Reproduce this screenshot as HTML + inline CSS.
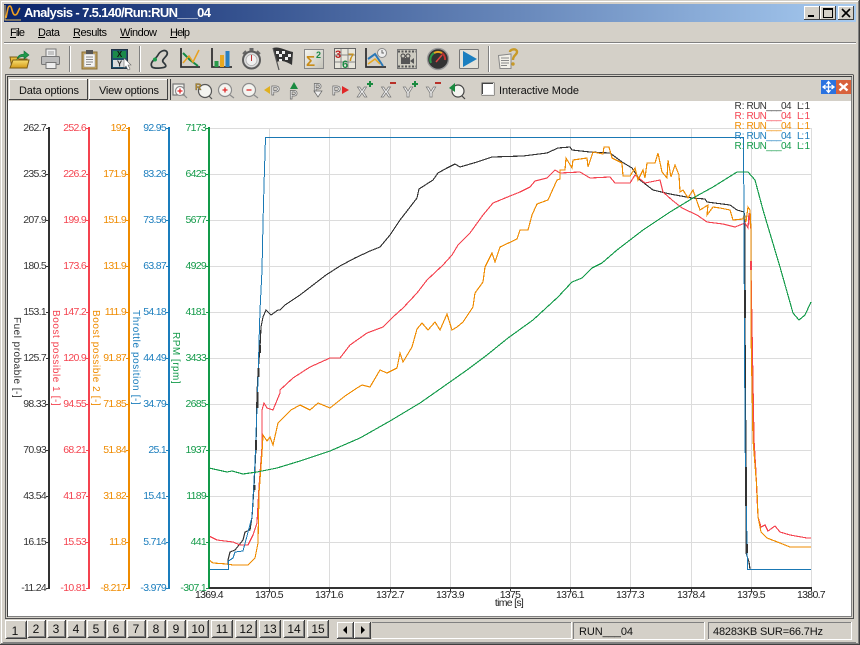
<!DOCTYPE html>
<html><head><meta charset="utf-8"><title>Analysis</title>
<style>
html,body{margin:0;padding:0;background:#d4d0c8}
svg{display:block;position:absolute;left:0;top:0}
text{font-family:"Liberation Sans",sans-serif;font-size:10.5px;letter-spacing:-.7px}
.m{font-size:11px;letter-spacing:0;fill:#000}
.t{font-size:12px;letter-spacing:0;fill:#111;text-anchor:middle}
.b{font-size:11px;letter-spacing:0;fill:#111}
.k text{fill:#333;text-anchor:end}.r text{fill:#f4434f;text-anchor:end}.o text{fill:#ef8b00;text-anchor:end}.u text{fill:#1a7dbd;text-anchor:end}.g text{fill:#139a49;text-anchor:end}
.x text{fill:#222;text-anchor:middle}
.v{letter-spacing:.35px;font-size:10px}
.l text{font-size:10px;letter-spacing:0}
.ic{font-family:"Liberation Sans",sans-serif;font-weight:bold;letter-spacing:0}
</style></head><body>
<svg width="860" height="645" viewBox="0 0 860 645" xmlns="http://www.w3.org/2000/svg">
<defs><linearGradient id="tb" x1="0" x2="1" y1="0" y2="0"><stop offset="0" stop-color="#0a246a"/><stop offset="1" stop-color="#a6caf0"/></linearGradient>
<linearGradient id="fo" x1="0" x2="0" y1="0" y2="1"><stop offset="0" stop-color="#f8df70"/><stop offset="1" stop-color="#d49a18"/></linearGradient>
<linearGradient id="bt" x1="0" x2="1" y1="0" y2="1"><stop offset="0" stop-color="#f4f4ee"/><stop offset="1" stop-color="#c4c2b8"/></linearGradient></defs>

<!-- window chrome -->
<rect width="860" height="645" fill="#d4d0c8"/>
<path d="M.5 645V.5H859" stroke="#d4d0c8" fill="none"/>
<path d="M1.5 644V1.5H858" stroke="#fff" fill="none"/>
<path d="M859.5 0V644.5H0" stroke="#404040" fill="none"/>
<path d="M858.5 1V643.5H1" stroke="#808080" fill="none"/>
<rect x="4" y="4" width="852" height="18" fill="url(#tb)"/>
<path d="M6 18C8 8 8 6 10 6C12 6 12 15 15 15C18 15 18 10 20 8" stroke="#f0a020" stroke-width="1.6" fill="none"/>
<path d="M5 5V20H21" stroke="#e8c060" fill="none"/>
<text x="24" y="17" textLength="187" style="font-size:13px;font-weight:bold;letter-spacing:0" fill="#fff">Analysis - 7.5.140/Run:RUN___04</text>
<!-- caption buttons -->
<g>
<rect x="804" y="6" width="16" height="14" fill="#d4d0c8"/><path d="M804.5 20V6.500H819.500" stroke="#fff" fill="none"/><path d="M819.500 6V19.500H804" stroke="#404040" fill="none"/><rect x="808" y="15" width="6" height="2" fill="#000"/>
<rect x="820" y="6" width="16" height="14" fill="#d4d0c8"/><path d="M820.5 20V6.500H835.500" stroke="#fff" fill="none"/><path d="M835.500 6V19.500H820" stroke="#404040" fill="none"/><path d="M823.500 8.500H832.500V17.500H823.500Z M823 9.500H833" stroke="#000" fill="none"/>
<rect x="838" y="6" width="16" height="14" fill="#d4d0c8"/><path d="M838.5 20V6.500H853.500" stroke="#fff" fill="none"/><path d="M853.500 6V19.500H838" stroke="#404040" fill="none"/><path d="M842 9L850 17M850 9L842 17" stroke="#000" stroke-width="1.6"/>
</g>

<!-- menu -->
<text class="m" x="10" y="36" textLength="15">File</text><rect x="10" y="37" width="6" height="1"/>
<text class="m" x="38" y="36" textLength="22">Data</text><rect x="38" y="37" width="7" height="1"/>
<text class="m" x="73" y="36" textLength="34">Results</text><rect x="73" y="37" width="7" height="1"/>
<text class="m" x="120" y="36" textLength="37">Window</text><rect x="120" y="37" width="10" height="1"/>
<text class="m" x="170" y="36" textLength="20">Help</text><rect x="170" y="37" width="7" height="1"/>
<rect x="4" y="42" width="852" height="1" fill="#808080"/><rect x="4" y="43" width="852" height="1" fill="#fff"/>

<!-- toolbar icons -->
<rect x="69" y="46" width="1" height="26" fill="#808080"/><rect x="70" y="46" width="1" height="26" fill="#fff"/>
<rect x="139" y="46" width="1" height="26" fill="#808080"/><rect x="140" y="46" width="1" height="26" fill="#fff"/>
<rect x="488" y="46" width="1" height="26" fill="#808080"/><rect x="489" y="46" width="1" height="26" fill="#fff"/>
<!-- open -->
<path d="M10 57H17L19 59H27V68H12Z" fill="#e9bb3c" stroke="#7c5c14"/><path d="M10 68L13 60H29L27 68Z" fill="url(#fo)" stroke="#7c5c14"/>
<path d="M17 59C18 55 21 54 24 54V51L29 55L24 59V56.500C21 56.500 19 57 17 59Z" fill="#1f9a4a" stroke="#14703a" stroke-width=".6"/>
<!-- print -->
<rect x="46" y="49" width="10" height="8" fill="#eee" stroke="#777"/><path d="M48 52H54M48 54H54" stroke="#999"/>
<rect x="41.500" y="56.500" width="18" height="8" rx="1" fill="#bbb" stroke="#777"/><rect x="46" y="62.500" width="10" height="6" fill="#eee" stroke="#777"/>
<!-- clipboard -->
<rect x="82" y="52" width="15" height="17" fill="#c4a25c" stroke="#8a7038"/><rect x="84" y="54" width="11" height="13" fill="#f4f4f4" stroke="#888" stroke-width=".5"/><rect x="86" y="50" width="7" height="4" fill="#555"/>
<path d="M86 57H93M86 59.500H93M86 62H93M86 64.500H91" stroke="#888"/>
<!-- XY -->
<rect x="111.500" y="49.500" width="16" height="19" fill="#1e4f6a" stroke="#234"/><rect x="113" y="51" width="13" height="7" fill="#1b8a4a"/><rect x="113" y="60" width="13" height="7" fill="#ddd"/>
<text class="ic" x="119.500" y="57" text-anchor="middle" style="font-size:8px" fill="#111">X</text><text class="ic" x="119.500" y="66.500" text-anchor="middle" style="font-size:8px" fill="#333">Y</text>
<path d="M124 58V68L126 66L128 70L130 69L128 65H131Z" fill="#fff" stroke="#666" stroke-width=".6"/>
<!-- track -->
<path d="M152 67C149 62 156 59 158 55C160 51 165 49 167 52C169 56 161 59 163 62C165 64 167 66 165 67C163 68 155 69 152 67Z" fill="none" stroke="#30383c" stroke-width="1.700"/><circle cx="155" cy="59.500" r="2" fill="#1a9a4a"/>
<!-- line chart -->
<path d="M181 48V67H200" stroke="#333" stroke-width="1.800" fill="none"/><path d="M183 53L190 60L198 66" stroke="#148a46" stroke-width="2" fill="none"/><path d="M183 63L189 56L193 62L199 50" stroke="#e8a020" stroke-width="1.500" fill="none"/>
<!-- bar -->
<path d="M212 48V67H232" stroke="#333" stroke-width="1.800" fill="none"/><rect x="214.500" y="61" width="4" height="6" fill="#2a9a4a"/><rect x="220" y="55" width="4" height="12" fill="#e8a820"/><rect x="225.500" y="51" width="4" height="16" fill="#2a80c0"/>
<!-- stopwatch -->
<circle cx="251.500" cy="60" r="8.500" fill="#dcdcdc" stroke="#5c5c5c" stroke-width="2"/><circle cx="251.500" cy="60" r="5.500" fill="#f0f0f0" stroke="#aaa" stroke-width=".7"/><rect x="249.500" y="48" width="4" height="3" fill="#666"/><path d="M257 51L260 54M246 51L243 54" stroke="#666" stroke-width="2"/><path d="M251.500 55V61" stroke="#c03030"/>
<!-- flag -->
<path d="M273 48C279 46 284 50 293 52L292 65C285 61 281 60 277 62Z" fill="#333"/>
<path d="M276 51h3v3h-3zM282 51h3v3h-3zM288 54h3v3h-3zM279 54h3v3h-3zM285 57h3v3h-3zM279 59h3v2h-3z" fill="#eee"/>
<path d="M273 48L279 70" stroke="#555" stroke-width="1.200"/>
<!-- sigma -->
<rect x="304.500" y="49.500" width="19" height="19" fill="url(#bt)" stroke="#888"/><text class="ic" x="306" y="66" style="font-size:15px" fill="#c98c18">Σ</text><text class="ic" x="316" y="58" style="font-size:9px" fill="#1a8a46">2</text>
<!-- grid -->
<rect x="334.500" y="48.500" width="21" height="20" fill="#e8e6dc" stroke="#666"/><path d="M341 49V68M348 49V68M335 55H355M335 62H355" stroke="#888"/>
<text class="ic" x="335" y="58" style="font-size:11px" fill="#c02020">3</text><text class="ic" x="342" y="68" style="font-size:11px" fill="#188a44">6</text><text class="ic" x="348" y="61" style="font-size:11px" fill="#c89018">7</text>
<!-- chart clock -->
<path d="M366 48V67H386" stroke="#333" stroke-width="1.800" fill="none"/><path d="M368 59L375 54L383 66" stroke="#2a78b8" stroke-width="2" fill="none"/><path d="M368 64L375 59L380 64" stroke="#e8a820" stroke-width="1.500" fill="none"/><circle cx="382" cy="53" r="4.500" fill="#eee" stroke="#888"/><path d="M382 50V53H384" stroke="#666" fill="none"/>
<!-- film -->
<rect x="397.500" y="49.500" width="19" height="19" fill="#cdcbc0" stroke="#777"/><path d="M398 51.500H416M398 66.500H416" stroke="#555" stroke-width="2" stroke-dasharray="2 1.500"/>
<circle cx="403" cy="56" r="2" fill="none" stroke="#444"/><circle cx="408" cy="56" r="2" fill="none" stroke="#444"/><rect x="401" y="58" width="9" height="6" fill="#555"/><path d="M410 61L414 58V64Z" fill="#555"/>
<!-- gauge -->
<circle cx="438" cy="59" r="10.500" fill="#333" stroke="#999" stroke-width="1.400"/><path d="M431 63A8 8 0 0 1 434 53" stroke="#2a9a4a" stroke-width="2" fill="none"/><path d="M434 53A8 8 0 0 1 442 53" stroke="#e8a820" stroke-width="2" fill="none"/><path d="M442 53A8 8 0 0 1 445 60" stroke="#c03030" stroke-width="2" fill="none"/><path d="M436 62L442 55" stroke="#e04040" stroke-width="1.500"/>
<!-- play -->
<rect x="459.500" y="49.500" width="19" height="19" rx="1" fill="#e4e2da" stroke="#777"/><path d="M463 51V67L477 59Z" fill="#1b7fc0"/>
<!-- help -->
<path d="M498.500 55.500L511 54V68.500H500Z" fill="#f2f0e8" stroke="#888"/><path d="M501 58H509M501 60.500H509M501 63H509M501 65.500H507" stroke="#888"/>
<path d="M510 52C510 49 517 48 517 52C517 55 513 55 513 60" stroke="#c89a28" stroke-width="2.400" fill="none"/><circle cx="513" cy="64" r="1.700" fill="#c89a28"/>

<!-- MDI frame -->
<rect x="5" y="74" width="849" height="545" fill="#d4d0c8"/>
<path d="M5.500 618.500V74.500H853.500" stroke="#606060" fill="none"/>
<path d="M7.500 617V76.500H852" stroke="#404040" fill="none"/>
<path d="M853.500 75V618.500H5" stroke="#505050" fill="none"/>
<path d="M851.500 77V616.500H8" stroke="#808080" fill="none"/>
<rect x="8" y="101" width="843" height="515" fill="#fff"/>

<!-- header buttons -->
<rect x="9" y="79" width="79" height="21" fill="#d4d0c8"/><path d="M9.500 100V79.500H88" stroke="#fff" fill="none"/><path d="M87.500 79V99.500H9" stroke="#404040" fill="none"/>
<text class="b" x="19" y="94" textLength="60">Data options</text>
<rect x="89" y="79" width="79" height="21" fill="#d4d0c8"/><path d="M89.500 100V79.500H168" stroke="#fff" fill="none"/><path d="M167.500 79V99.500H89" stroke="#404040" fill="none"/>
<text class="b" x="99" y="94" textLength="60">View options</text>
<rect x="170" y="79" width="1" height="21" fill="#404040"/>

<!-- second toolbar -->
<g fill="none" stroke="#8c8c8c" stroke-width="1.200">
<rect x="173" y="84" width="11" height="11" fill="#f2f2ee" stroke="#777"/><circle cx="180" cy="91" r="4.500" fill="#fff"/><path d="M184 95L187 98"/>
<circle cx="205" cy="91" r="6.500" fill="#f4f4f0" stroke="#555"/><path d="M209 96L212 99" stroke="#555"/>
<circle cx="225" cy="90" r="6.500" fill="#f4f4f0"/><path d="M230 95L234 98"/>
<circle cx="249" cy="90" r="6.500" fill="#f4f4f0"/><path d="M254 95L258 98"/>
<circle cx="458" cy="91" r="6" fill="#f4f4f0" stroke="#444"/><path d="M462 96L465 99" stroke="#444"/>
</g>
<path d="M177.500 91H182.500M180 88.500V93.500M222.500 90H227.500M225 87.500V92.500" stroke="#e02828" stroke-width="1.300"/><path d="M246.500 90H251.500" stroke="#e02828" stroke-width="1.300"/>
<text class="ic" x="195" y="90" style="font-size:9px" fill="#c09020" stroke="#555" stroke-width=".3">R</text>
<path d="M264 90L270 86V94Z" fill="#e0b020"/><text class="ic" x="271" y="95" style="font-size:13px" fill="#eee" stroke="#666" stroke-width=".7">P</text>
<path d="M290 89L294 82L298 89Z" fill="#1a8a40"/><text class="ic" x="289.500" y="99" style="font-size:12px" fill="#eee" stroke="#666" stroke-width=".7">P</text>
<text class="ic" x="313.500" y="92" style="font-size:12px" fill="#eee" stroke="#666" stroke-width=".7">P</text><path d="M314 91L318 97L322 91Z" fill="#eee" stroke="#666" stroke-width=".7"/>
<text class="ic" x="332" y="95" style="font-size:13px" fill="#eee" stroke="#666" stroke-width=".7">P</text><path d="M342 86L349 90L342 94Z" fill="#e02828"/>
<text class="ic" x="357" y="97" style="font-size:15px" fill="#eee" stroke="#777" stroke-width=".7">X</text><path d="M367 84H373M370 81V87" stroke="#1a8a40" stroke-width="2"/>
<text class="ic" x="381" y="97" style="font-size:15px" fill="#eee" stroke="#777" stroke-width=".7">X</text><path d="M390 83H396" stroke="#b83028" stroke-width="2"/>
<text class="ic" x="403" y="97" style="font-size:15px" fill="#eee" stroke="#777" stroke-width=".7">Y</text><path d="M412 84H418M415 81V87" stroke="#1a8a40" stroke-width="2"/>
<text class="ic" x="426" y="97" style="font-size:15px" fill="#eee" stroke="#777" stroke-width=".7">Y</text><path d="M435 83H441" stroke="#b83028" stroke-width="2"/>
<path d="M449 88L455 83V92Z" fill="#1a8a40"/>
<rect x="482" y="83" width="12" height="12" fill="#fff" stroke="#555"/><path d="M482.500 95V83.500H494" stroke="#444" fill="none"/><path d="M493.500 83V94.500H482" stroke="#eee" fill="none"/>
<text class="b" x="499" y="94" textLength="80">Interactive Mode</text>
<rect x="821" y="80" width="15" height="14" fill="#2a72e0"/><path d="M828.500 82V92M823 87H834M826.500 84L828.500 81.500L830.500 84M826.500 90L828.500 92.500L830.500 90M825.500 85L823 87L825.500 89M831.500 85L834 87L831.500 89" stroke="#fff" stroke-width="1.300" fill="none"/>
<rect x="836" y="80" width="15" height="14" fill="#d8623c"/><path d="M839.500 83.500L847.500 90.500M847.500 83.500L839.500 90.500" stroke="#fff" stroke-width="2.400"/>

<!-- grid -->
<g stroke="#dcdcdc" stroke-width="1" shape-rendering="crispEdges">
<path d="M209 128.500H811M209 174.500H811M209 220.500H811M209 266.500H811M209 312.500H811M209 358.500H811M209 404.500H811M209 450.500H811M209 496.500H811M209 542.500H811"/>
<path d="M269.500 128V588M329.500 128V588M390.500 128V588M450.500 128V588M510.500 128V588M570.500 128V588M630.500 128V588M691.500 128V588M751.500 128V588M811.500 128V588"/>
</g>

<!-- curves -->
<g fill="none" stroke-width="1.150" shape-rendering="crispEdges" stroke-linejoin="miter">
<polyline stroke="#333" points="228,565 228,560 230,552 235,550 243,540 245,532 250,530 252,517 254,487 256,447 257,393 258,373 260,347 261,327 263,317 266,310 271,315 278,310 280,310 285,305 300,295 313,285 326,275 340,266 355,258 370,251 380,247 390,235 400,220 407,211 417,198 419,189 433,180 438,173 447,168 455,164 460,167 477,162 492,157 523,156 547,153 558,148 570,147 572,150 590,152 610,153 622,162 632,168 640,180 653,190 670,194 692,198 705,199 707,202 730,205 737,210 744,212 745,217 745,318 746,468 746,553 749,562 750,569"/>
<polyline stroke="#f4434f" points="209,536 217,540 233,542 240,545 248,545 253,535 257,523 259,487 262,447 262,410 264,403 267,408 273,410 280,393 280,390 293,378 310,367 330,358 340,358 350,345 367,333 383,327 393,317 403,308 417,293 427,280 443,265 452,255 458,245 470,233 483,215 493,203 510,196 520,192 530,187 535,181 547,178 555,170 560,173 580,172 590,178 610,177 615,183 630,183 635,175 645,183 660,180 663,192 672,200 682,208 697,215 707,222 723,224 735,227 745,223 748,228 749,213 751,230 751,270 754,440 756,473 757,497 758,517 761,527 765,525 768,531 775,526 780,532 790,535 807,538 811,538"/>
<polyline stroke="#ef8b00" points="209,560 213,563 227,564 233,565 248,565 255,558 258,543 259,493 262,453 263,435 267,441 270,437 273,445 278,423 285,416 291,410 300,405 310,410 318,403 330,408 345,396 357,388 362,385 370,387 380,370 387,373 397,368 400,353 403,362 412,347 417,329 422,323 428,330 435,322 440,330 447,314 452,330 457,327 463,322 473,307 475,293 483,282 485,267 492,253 495,262 500,247 517,239 520,230 528,230 532,215 537,204 548,200 557,180 560,179 560,170 565,170 566,158 572,168 573,160 587,158 588,167 593,152 603,154 604,147 609,147 612,158 622,163 623,176 630,176 635,168 638,180 643,170 645,178 647,163 655,163 658,153 662,172 667,178 668,160 671,177 675,165 679,175 680,192 683,190 688,198 693,190 700,210 708,205 707,215 713,207 720,208 730,210 733,220 743,219 744,215 746,222 748,207 750,210 751,230 751,330 753,440 757,490 758,517 761,532 767,538 780,543 790,547 811,547"/>
<polyline stroke="#1a78b4" stroke-width="1" points="209.500,569.500 228.500,569.500 228.500,561 233,558 235,552 243,551 252,517 255,462 258,380 259,343 260,310 262,270 263,223 264,185 265.500,137.500 743.500,137.500 744,230 745,440 747.500,569.500 811,569.500"/>
<polyline stroke="#139a49" points="209,468 227,472 232,471 243,474 257,472 277,468 300,461 330,451 360,438 390,421 420,403 440,389 467,370 487,355 508,338 533,320 558,297 572,282 582,278 592,268 602,263 617,250 643,230 670,212 693,198 713,187 737,172 748,172 755,180 763,210 780,267 793,313 799,320 805,315 811,302"/>
</g>
<path d="M257.500 392V408M256 440V450M254.500 485V490M260 345V353M258.500 368V377M745 290V318M746 467V506M747 544V553" stroke="#333" stroke-width="2" shape-rendering="crispEdges"/>
<path d="M751 261V270" stroke="#f4434f" stroke-width="2"/>

<!-- axes -->
<g shape-rendering="crispEdges">
<rect x="48" y="127" width="2" height="462" fill="#333"/><rect x="88" y="127" width="2" height="462" fill="#f4434f"/><rect x="128" y="127" width="2" height="462" fill="#ef8b00"/><rect x="168" y="127" width="2" height="462" fill="#1a7dbd"/><rect x="208" y="127" width="2" height="462" fill="#139a49"/>
<rect x="209" y="587" width="603" height="2" fill="#333"/>
<path d="M46 128.500h2M46 174.500h2M46 220.500h2M46 266.500h2M46 312.500h2M46 358.500h2M46 404.500h2M46 450.500h2M46 496.500h2M46 542.500h2M46 588.500h2" stroke="#333"/>
<path d="M86 128.500h2M86 174.500h2M86 220.500h2M86 266.500h2M86 312.500h2M86 358.500h2M86 404.500h2M86 450.500h2M86 496.500h2M86 542.500h2M86 588.500h2" stroke="#f4434f"/>
<path d="M126 128.500h2M126 174.500h2M126 220.500h2M126 266.500h2M126 312.500h2M126 358.500h2M126 404.500h2M126 450.500h2M126 496.500h2M126 542.500h2M126 588.500h2" stroke="#ef8b00"/>
<path d="M166 128.500h2M166 174.500h2M166 220.500h2M166 266.500h2M166 312.500h2M166 358.500h2M166 404.500h2M166 450.500h2M166 496.500h2M166 542.500h2M166 588.500h2" stroke="#1a7dbd"/>
<path d="M206 128.500h2M206 174.500h2M206 220.500h2M206 266.500h2M206 312.500h2M206 358.500h2M206 404.500h2M206 450.500h2M206 496.500h2M206 542.500h2M206 588.500h2" stroke="#139a49"/>
<path d="M269.500 589v2M329.500 589v2M390.500 589v2M450.500 589v2M510.500 589v2M570.500 589v2M630.500 589v2M691.500 589v2M751.500 589v2M811.500 589v2" stroke="#333"/>
</g>
<g class="k"><text x="46" y="131">262.7</text><text x="46" y="177">235.3</text><text x="46" y="223">207.9</text><text x="46" y="269">180.5</text><text x="46" y="315">153.1</text><text x="46" y="361">125.7</text><text x="46" y="407">98.33</text><text x="46" y="453">70.93</text><text x="46" y="499">43.54</text><text x="46" y="545">16.15</text><text x="46" y="591">-11.24</text></g>
<g class="r"><text x="86" y="131">252.6</text><text x="86" y="177">226.2</text><text x="86" y="223">199.9</text><text x="86" y="269">173.6</text><text x="86" y="315">147.2</text><text x="86" y="361">120.9</text><text x="86" y="407">94.55</text><text x="86" y="453">68.21</text><text x="86" y="499">41.87</text><text x="86" y="545">15.53</text><text x="86" y="591">-10.81</text></g>
<g class="o"><text x="126" y="131">192</text><text x="126" y="177">171.9</text><text x="126" y="223">151.9</text><text x="126" y="269">131.9</text><text x="126" y="315">111.9</text><text x="126" y="361">91.87</text><text x="126" y="407">71.85</text><text x="126" y="453">51.84</text><text x="126" y="499">31.82</text><text x="126" y="545">11.8</text><text x="126" y="591">-8.217</text></g>
<g class="u"><text x="166" y="131">92.95</text><text x="166" y="177">83.26</text><text x="166" y="223">73.56</text><text x="166" y="269">63.87</text><text x="166" y="315">54.18</text><text x="166" y="361">44.49</text><text x="166" y="407">34.79</text><text x="166" y="453">25.1</text><text x="166" y="499">15.41</text><text x="166" y="545">5.714</text><text x="166" y="591">-3.979</text></g>
<g class="g"><text x="206" y="131">7173</text><text x="206" y="177">6425</text><text x="206" y="223">5677</text><text x="206" y="269">4929</text><text x="206" y="315">4181</text><text x="206" y="361">3433</text><text x="206" y="407">2685</text><text x="206" y="453">1937</text><text x="206" y="499">1189</text><text x="206" y="545">441</text><text x="206" y="591">-307.1</text></g>
<g class="x"><text x="209" y="598">1369.4</text><text x="269" y="598">1370.5</text><text x="329" y="598">1371.6</text><text x="390" y="598">1372.7</text><text x="450" y="598">1373.9</text><text x="510" y="598">1375</text><text x="570" y="598">1376.1</text><text x="630" y="598">1377.3</text><text x="691" y="598">1378.4</text><text x="751" y="598">1379.5</text><text x="811" y="598">1380.7</text><text x="509" y="606">time [s]</text></g>

<!-- rotated titles -->
<text class="v" transform="translate(14,317) rotate(90)" textLength="81" fill="#333">Fuel probable [-]</text>
<text class="v" transform="translate(53,310) rotate(90)" textLength="96" fill="#f4434f">Boost possible 1 [-]</text>
<text class="v" transform="translate(93,310) rotate(90)" textLength="96" fill="#ef8b00">Boost possible 2 [-]</text>
<text class="v" transform="translate(133,310) rotate(90)" textLength="95" fill="#1a7dbd">Throttle position [-]</text>
<text class="v" transform="translate(173,332) rotate(90)" textLength="52" fill="#139a49">RPM [rpm]</text>

<!-- legend -->
<g class="l" fill="#333"><text x="734.500" y="109">R:</text><text x="746.500" y="109" textLength="45">RUN___04</text><text x="797" y="109" textLength="13">L: 1</text></g>
<g class="l" fill="#f4434f"><text x="734.500" y="119">R:</text><text x="746.500" y="119" textLength="45">RUN___04</text><text x="797" y="119" textLength="13">L: 1</text></g>
<g class="l" fill="#ef8b00"><text x="734.500" y="129">R:</text><text x="746.500" y="129" textLength="45">RUN___04</text><text x="797" y="129" textLength="13">L: 1</text></g>
<g class="l" fill="#1a7dbd"><text x="734.500" y="139">R:</text><text x="746.500" y="139" textLength="45">RUN___04</text><text x="797" y="139" textLength="13">L: 1</text></g>
<g class="l" fill="#139a49"><text x="734.500" y="149">R:</text><text x="746.500" y="149" textLength="45">RUN___04</text><text x="797" y="149" textLength="13">L: 1</text></g>

<!-- tabs -->
<g fill="none">
<path d="M5.500 638V620.500H26" stroke="#fff"/><path d="M26.500 621V638.500H6" stroke="#404040"/><path d="M25.500 622V637.500H7" stroke="#808080"/>
<path d="M27.500 637V620.500H46M47.500 637V620.500H66M67.500 637V620.500H86M87.500 637V620.500H106M107.500 637V620.500H126M127.500 637V620.500H146M147.500 637V620.500H166M167.500 637V620.500H186M187.500 637V620.500H209M211.500 637V620.500H233M235.500 637V620.500H257M259.500 637V620.500H281M283.500 637V620.500H305M307.500 637V620.500H329" stroke="#fff"/>
<path d="M45.500 620V637.500H28M65.500 620V637.500H48M85.500 620V637.500H68M105.500 620V637.500H88M125.500 620V637.500H108M145.500 620V637.500H128M165.500 620V637.500H148M185.500 620V637.500H168M208.500 620V637.500H188M232.500 620V637.500H212M256.500 620V637.500H236M280.500 620V637.500H260M304.500 620V637.500H284M328.500 620V637.500H308" stroke="#404040"/>
<path d="M44.500 621V636.500H29M64.500 621V636.500H49M84.500 621V636.500H69M104.500 621V636.500H89M124.500 621V636.500H109M144.500 621V636.500H129M164.500 621V636.500H149M184.500 621V636.500H169M207.500 621V636.500H189M231.500 621V636.500H213M255.500 621V636.500H237M279.500 621V636.500H261M303.500 621V636.500H285M327.500 621V636.500H309" stroke="#808080"/>
</g>
<text class="t" x="15" y="635">1</text><text class="t" x="36" y="633">2</text><text class="t" x="56" y="633">3</text><text class="t" x="76" y="633">4</text><text class="t" x="96" y="633">5</text><text class="t" x="116" y="633">6</text><text class="t" x="136" y="633">7</text><text class="t" x="156" y="633">8</text><text class="t" x="176" y="633">9</text><text class="t" x="198" y="633">10</text><text class="t" x="222" y="633">11</text><text class="t" x="246" y="633">12</text><text class="t" x="270" y="633">13</text><text class="t" x="294" y="633">14</text><text class="t" x="318" y="633">15</text>
<g fill="none"><path d="M337.500 638V622.500H353.500M354.500 638V622.500H370.500" stroke="#fff"/><path d="M353.500 622V638.500H337M370.500 622V638.500H354" stroke="#404040"/><path d="M352.500 623V637.500H338M369.500 623V637.500H355" stroke="#808080"/></g>
<path d="M343 630L347 626V634Z M361 626L365 630L361 634Z" fill="#000"/>

<!-- status -->
<path d="M372 638.500H571.500V622" stroke="#fff" fill="none"/><path d="M372 622.500H571" stroke="#808080" fill="none"/>
<path d="M573.500 639V622.500H704" stroke="#808080" fill="none"/><path d="M704.500 622V639.500H573" stroke="#fff" fill="none"/>
<path d="M708.500 639V622.500H851" stroke="#808080" fill="none"/><path d="M851.500 622V639.500H708" stroke="#fff" fill="none"/>
<text class="b" x="579" y="635" textLength="54">RUN___04</text>
<text class="b" x="713" y="635" textLength="110">48283KB SUR=66.7Hz</text>
<rect x="3" y="642" width="853" height="1" fill="#808080"/>
</svg>
</body></html>
